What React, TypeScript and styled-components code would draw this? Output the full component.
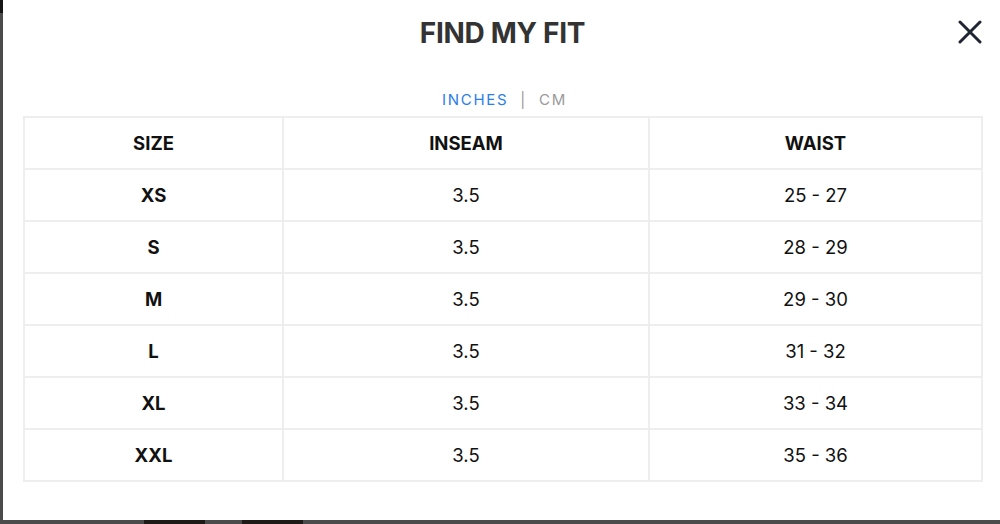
import React from "react";
import styled, { createGlobalStyle } from "styled-components";

const Global = createGlobalStyle`
  html, body { margin: 0; padding: 0; }
  body {
    background: #4b4b4b;
    font-family: Inter, "Helvetica Neue", Arial, sans-serif;
    width: 1000px;
    height: 524px;
    overflow: hidden;
  }
`;

const Backdrop = styled.div`
  width: 1000px;
  height: 524px;
  display: flex;
  flex-direction: column;
  background: #4b4b4b;
  border-top: 13px solid #151515;
  box-sizing: border-box;
`;

const Modal = styled.div`
  margin-top: -13px;
  margin-left: 3px;
  width: 997px;
  height: 520px;
  background: #ffffff;
  display: flex;
  flex-direction: column;
  position: relative;
  box-sizing: border-box;
  padding: 0 18px 0 20px;
`;

const BottomStrip = styled.div`
  display: flex;
  height: 4px;
`;

const Patch = styled.div<{ $w: number; $dark?: boolean }>`
  width: ${(p) => p.$w}px;
  background: ${(p) => (p.$dark ? "#1e1a18" : "#4b4b4b")};
`;

const Title = styled.h1`
  margin: 16px 0 0;
  text-align: center;
  font-family: Inter, Arial, sans-serif;
  font-weight: 700;
  font-size: 28px;
  line-height: 34px;
  color: #333333;
  letter-spacing: -0.3px;
`;

const Close = styled.button`
  position: absolute;
  top: 19px;
  right: 17px;
  width: 26px;
  height: 26px;
  padding: 0;
  border: none;
  background: transparent;
  display: flex;
  align-items: center;
  justify-content: center;
  cursor: pointer;
`;

const UnitBar = styled.div`
  margin-top: 41px;
  display: flex;
  justify-content: center;
  align-items: center;
  gap: 12px;
  font-family: Inter, Arial, sans-serif;
  font-size: 15px;
  line-height: 18px;
  letter-spacing: 1.7px;
  padding-left: 4px;
`;

const Unit = styled.span<{ $active?: boolean }>`
  color: ${(p) => (p.$active ? "#2b7de9" : "#9a9a9a")};
`;

const Sep = styled.span`
  color: #9a9a9a;
  font-size: 15px;
`;

const Table = styled.div`
  margin-top: 7px;
  display: grid;
  grid-template-columns: 259px 366px 333px;
  border-top: 2px solid #eeeeee;
  border-left: 2px solid #eeeeee;
  width: 960px;
  box-sizing: border-box;
`;

const Cell = styled.div<{ $bold?: boolean }>`
  height: 52px;
  box-sizing: border-box;
  border-right: 2px solid #eeeeee;
  border-bottom: 2px solid #eeeeee;
  display: flex;
  align-items: center;
  justify-content: center;
  font-family: Inter, Arial, sans-serif;
  font-size: 18.5px;
  font-weight: ${(p) => (p.$bold ? 700 : 400)};
  color: #111111;
`;

const rows = [
  ["XS", "3.5", "25 - 27"],
  ["S", "3.5", "28 - 29"],
  ["M", "3.5", "29 - 30"],
  ["L", "3.5", "31 - 32"],
  ["XL", "3.5", "33 - 34"],
  ["XXL", "3.5", "35 - 36"],
];

export default function App() {
  return (
    <>
      <Global />
      <Backdrop>
        <Modal>
          <Title>FIND MY FIT</Title>
          <Close aria-label="Close">
            <svg width="24" height="24" viewBox="0 0 24 24">
              <path d="M2 2 L22 22 M22 2 L2 22" stroke="#1f2533" strokeWidth="3" strokeLinecap="round" />
            </svg>
          </Close>
          <UnitBar>
            <Unit $active>INCHES</Unit>
            <Sep>|</Sep>
            <Unit>CM</Unit>
          </UnitBar>
          <Table>
            <Cell $bold>SIZE</Cell>
            <Cell $bold>INSEAM</Cell>
            <Cell $bold>WAIST</Cell>
            {rows.map((r) => (
              <React.Fragment key={r[0]}>
                <Cell $bold>{r[0]}</Cell>
                <Cell>{r[1]}</Cell>
                <Cell>{r[2]}</Cell>
              </React.Fragment>
            ))}
          </Table>
        </Modal>
        <BottomStrip>
          <Patch $w={144} />
          <Patch $w={61} $dark />
          <Patch $w={37} />
          <Patch $w={61} $dark />
          <Patch $w={697} />
        </BottomStrip>
      </Backdrop>
    </>
  );
}
